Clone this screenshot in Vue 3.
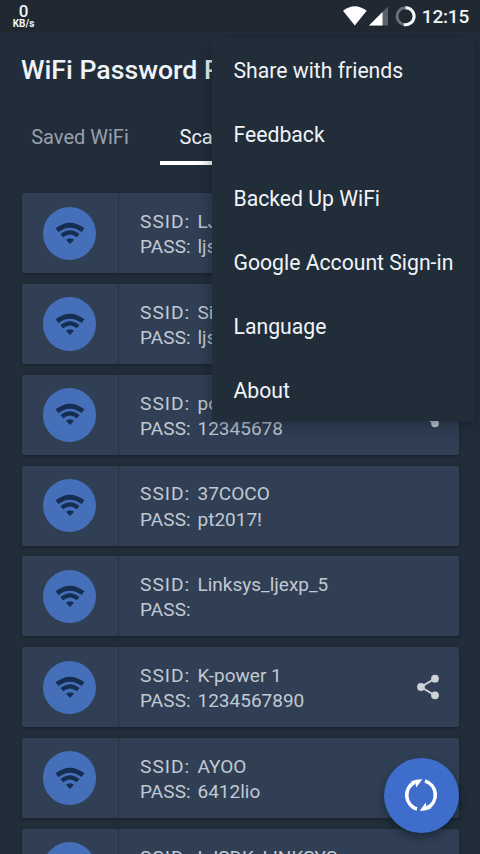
<script setup>
const networks = [
  { ssid: 'LJSDK', pass: 'ljsdk' },
  { ssid: 'Sinko', pass: 'ljsdk' },
  { ssid: 'pow', pass: '12345678', share: true },
  { ssid: '37COCO', pass: 'pt2017!' },
  { ssid: 'Linksys_ljexp_5', pass: '' },
  { ssid: 'K-power 1', pass: '1234567890', share: true },
  { ssid: 'AYOO', pass: '6412lio' },
  { ssid: 'LJSDK_LINKSYS', pass: '' },
]
const menu = ['Share with friends', 'Feedback', 'Backed Up WiFi', 'Google Account Sign-in', 'Language', 'About']
</script>

<template>
  <div class="screen">
    <header class="status">
      <div class="speed"><b>0</b><span>KB/s</span></div>
      <div class="tray">
        <svg class="tray-icons" width="74" height="22" viewBox="0 0 74 22">
          <path d="M0 5.8Q11.8-3.2 23.7 5.8L11.8 20.5Z" fill="#fff" />
          <path d="M26 20.5L45 1.5V20.5Z" fill="#59626c" />
          <path d="M26 20.5L39.5 7V20.5Z" fill="#fff" />
          <circle cx="62.5" cy="11.2" r="8.5" fill="none" stroke="#66717b" stroke-width="3" />
          <path d="M62.5 2.7A8.5 8.5 0 1 1 60.8 19.5" fill="none" stroke="#f5f8fa" stroke-width="3" />
        </svg>
        <span class="clock">12:15</span>
      </div>
    </header>

    <div class="appbar">
      <h1>WiFi Password Pro</h1>
      <nav class="tabs">
        <div class="tab">Saved WiFi</div>
        <div class="tab active">Scan</div>
      </nav>
    </div>

    <main class="list">
      <article v-for="(n, i) in networks" :key="i" class="card">
        <div class="badge-cell">
          <div class="badge">
            <svg width="30" height="23" viewBox="0 0 30 23">
              <path d="M2 8.2Q15-1.8 28 8.2" fill="none" stroke="#142d50" stroke-width="4.8" />
              <path d="M6.8 13.7Q15 7 23.2 13.7" fill="none" stroke="#142d50" stroke-width="4.2" />
              <path d="M11 17.8Q15 14.6 19 17.8L15 22Z" fill="#142d50" />
            </svg>
          </div>
        </div>
        <div class="info">
          <div class="line"><span class="label ssid">SSID:</span><span class="value">{{ n.ssid }}</span></div>
          <div class="line"><span class="label">PASS:</span><span class="value">{{ n.pass }}</span></div>
        </div>
        <svg v-if="n.share" class="share" width="24" height="26" viewBox="0 0 24 26">
          <path d="M19 4.5L5 13L19 21.5" fill="none" stroke="#cdd1d8" stroke-width="2" />
          <circle cx="19" cy="4.7" r="3.9" fill="#cdd1d8" />
          <circle cx="5" cy="13" r="3.9" fill="#cdd1d8" />
          <circle cx="19" cy="21.3" r="3.9" fill="#cdd1d8" />
        </svg>
      </article>
    </main>

    <div class="menu">
      <div v-for="m in menu" :key="m" class="item">{{ m }}</div>
    </div>

    <button class="fab">
      <svg width="34" height="34" viewBox="0 0 34 34">
        <path d="M13 31A14.5 14.5 0 0 1 10.5 4.3" fill="none" stroke="#fff" stroke-width="3.6" />
        <path d="M6.5 4Q11 1 18.3 1.2L12.2 9.6L11.6 5.6Z" fill="#fff" />
        <path d="M21 3A14.5 14.5 0 0 1 23.5 29.7" fill="none" stroke="#fff" stroke-width="3.6" />
        <path d="M27.5 30Q23 33 15.7 32.8L21.8 24.4L22.4 28.4Z" fill="#fff" />
      </svg>
    </button>
  </div>
</template>

<style>
body { margin: 0; background: #212d39; }
</style>

<style scoped>
* { box-sizing: border-box; }
.screen {
  position: relative;
  width: 480px;
  height: 854px;
  overflow: hidden;
  background: #212d39;
  color: #f0f4f8;
  font-family: Roboto, sans-serif;
}
.status {
  height: 32px;
  padding: 0 11px 0 12px;
  display: flex;
  justify-content: space-between;
  background: #202932;
}
.speed {
  display: flex;
  flex-direction: column;
  align-items: center;
  width: 23px;
  padding-top: 4px;
}
.speed b { font-size: 17px; line-height: 15px; font-weight: 500; }
.speed span { font-size: 10px; line-height: 10px; font-weight: 700; }
.tray { display: flex; align-items: flex-start; gap: 4.5px; padding-top: 5px; }
.clock { font-size: 19px; line-height: 23px; font-weight: 500; letter-spacing: -.2px; }
.appbar { height: 133px; background: #222d3b; border-bottom: 1px solid #202a36; }
h1 {
  margin: 0;
  padding: 22px 0 0 21px;
  font-size: 26.7px;
  line-height: 32px;
  height: 56px;
  font-weight: 500;
  white-space: nowrap;
}
.tabs { display: flex; height: 77px; }
.tab {
  width: 160px;
  padding-top: 34px;
  text-align: center;
  font-size: 20px;
  line-height: 30px;
  color: #97a1ac;
}
.tab.active {
  width: 120px;
  color: #f0f4f8;
  height: 77px;
  padding-left: 19.5px;
  text-align: left;
  border-bottom: 4px solid #fff;
}
.list { display: flex; flex-direction: column; gap: 10.8px; padding: 28.3px 21px 0 21.5px; }
.card {
  flex: none;
  display: flex;
  height: 80px;
  border-radius: 2px;
  background: #303f54;
  box-shadow: 0 1px 3px rgba(10, 20, 30, .5);
}
.badge-cell {
  width: 97px;
  display: flex;
  align-items: center;
  justify-content: center;
  border-right: 1.5px solid #243246;
}
.badge {
  width: 53.5px;
  height: 53.5px;
  border-radius: 50%;
  background: #456fb8;
  display: flex;
  align-items: center;
  justify-content: center;
}
.info { flex: 1; padding: 15.8px 0 0 21.5px; }
.line {
  display: flex;
  height: 25.2px;
  align-items: center;
  font-size: 19px;
  line-height: 25.2px;
  color: #c2c9d3;
  white-space: nowrap;
}
.label { width: 57.5px; letter-spacing: .1px; }
.label.ssid { font-size: 19.2px; letter-spacing: 1px; }
.value { letter-spacing: 0; }
.share { align-self: center; margin-right: 19px; }
.menu {
  position: absolute;
  left: 212px;
  top: 38px;
  width: 262px;
  height: 383px;
  background: #222d3a;
  box-shadow: 0 4px 14px rgba(12, 22, 34, .45);
}
.item {
  height: 64.1px;
  padding-left: 21.5px;
  font-size: 21.2px;
  line-height: 65.5px;
  white-space: nowrap;
}
.fab {
  position: absolute;
  left: 384px;
  top: 757.5px;
  width: 75px;
  height: 75px;
  padding: 0;
  border: 0;
  border-radius: 50%;
  background: #3f6dcb;
  box-shadow: 0 4px 8px rgba(10, 20, 30, .5);
  display: flex;
  align-items: center;
  justify-content: center;
}
.fab svg { margin-right: 1px; }
</style>
